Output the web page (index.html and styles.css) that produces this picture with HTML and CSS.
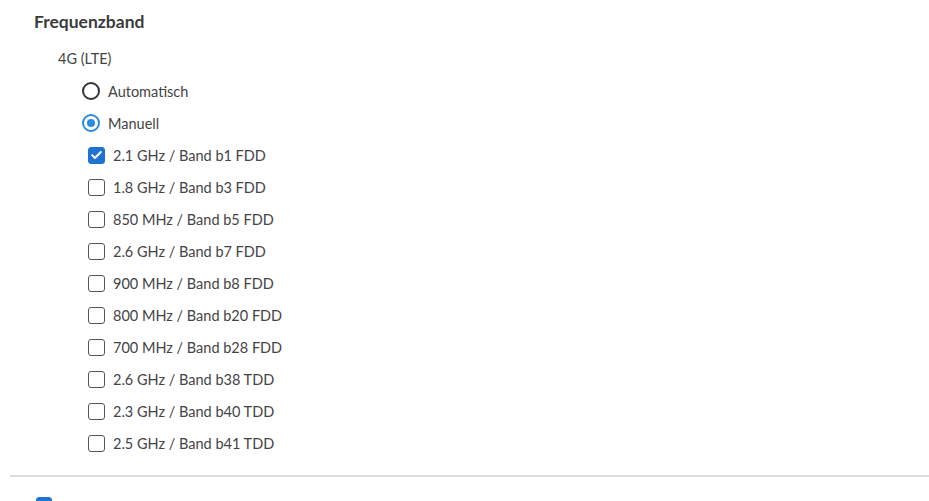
FILE: index.html
```html
<!DOCTYPE html>
<html lang="de">
<head>
<meta charset="utf-8">
<link rel="stylesheet" href="styles.css">
</head>
<body>
<div class="page">
  <h2 class="title">Frequenzband</h2>
  <div class="group">
    <div class="group-label">4G (LTE)</div>
    <div class="radios">
      <label class="radio"><span class="radio-dot"></span><span>Automatisch</span></label>
      <label class="radio"><span class="radio-dot on"></span><span>Manuell</span></label>
    </div>
    <div class="checks">
      <label class="check"><span class="box on"><svg viewBox="0 0 18 18" width="18" height="18"><path d="M3.8 9.2l3.4 3.4L14.2 5.4" fill="none" stroke="#fff" stroke-width="2.4" stroke-linecap="round" stroke-linejoin="round"/></svg></span><span>2.1 GHz / Band b1 FDD</span></label>
      <label class="check"><span class="box"></span><span>1.8 GHz / Band b3 FDD</span></label>
      <label class="check"><span class="box"></span><span>850 MHz / Band b5 FDD</span></label>
      <label class="check"><span class="box"></span><span>2.6 GHz / Band b7 FDD</span></label>
      <label class="check"><span class="box"></span><span>900 MHz / Band b8 FDD</span></label>
      <label class="check"><span class="box"></span><span>800 MHz / Band b20 FDD</span></label>
      <label class="check"><span class="box"></span><span>700 MHz / Band b28 FDD</span></label>
      <label class="check"><span class="box"></span><span>2.6 GHz / Band b38 TDD</span></label>
      <label class="check"><span class="box"></span><span>2.3 GHz / Band b40 TDD</span></label>
      <label class="check"><span class="box"></span><span>2.5 GHz / Band b41 TDD</span></label>
    </div>
  </div>
  <hr class="divider">
  <div class="next"><span class="box on"></span></div>
</div>
</body>
</html>
```
FILE: styles.css
```css
html, body {
  margin: 0;
  padding: 0;
  background: #fff;
}
body {
  font-family: Lato, "Liberation Sans", sans-serif;
  color: #444;
  font-size: 14.5px;
  overflow: hidden;
  height: 501px;
}
.page {
  padding: 11px 0 0 10px;
}
.title {
  margin: 0 0 0 24px;
  font-size: 17.5px;
  font-weight: 700;
  color: #3b3b3b;
  line-height: 22px;
}
.group {
  padding-left: 48px;
  margin-top: 16px;
}
.group-label {
  line-height: 20px;
  height: 20px;
}
.radios {
  padding-left: 24px;
  margin-top: 6px;
}
.radio {
  display: flex;
  align-items: center;
  gap: 8px;
  height: 32px;
}
.radio-dot {
  width: 18px;
  height: 18px;
  box-sizing: border-box;
  border: 2px solid #333;
  border-radius: 50%;
  display: flex;
  align-items: center;
  justify-content: center;
}
.radio-dot.on {
  border-color: #2b8be3;
}
.radio-dot.on::after {
  content: "";
  width: 8px;
  height: 8px;
  border-radius: 50%;
  background: #2b8be3;
}
.checks {
  padding-left: 30px;
}
.check {
  display: flex;
  align-items: center;
  gap: 8px;
  height: 32px;
}
.box {
  width: 17px;
  height: 17px;
  box-sizing: border-box;
  border: 1.5px solid #555;
  border-radius: 3px;
  display: flex;
  align-items: center;
  justify-content: center;
}
.box.on {
  background: #1e73d2;
  border-color: #1e73d2;
}
.box svg {
  width: 16px;
  height: 16px;
}
.divider {
  margin: 16px 0 0 0;
  border: 0;
  border-top: 2px solid #dcdcdc;
}
.next {
  padding: 20px 0 0 26px;
}
.next .box {
  width: 16px;
}
```
